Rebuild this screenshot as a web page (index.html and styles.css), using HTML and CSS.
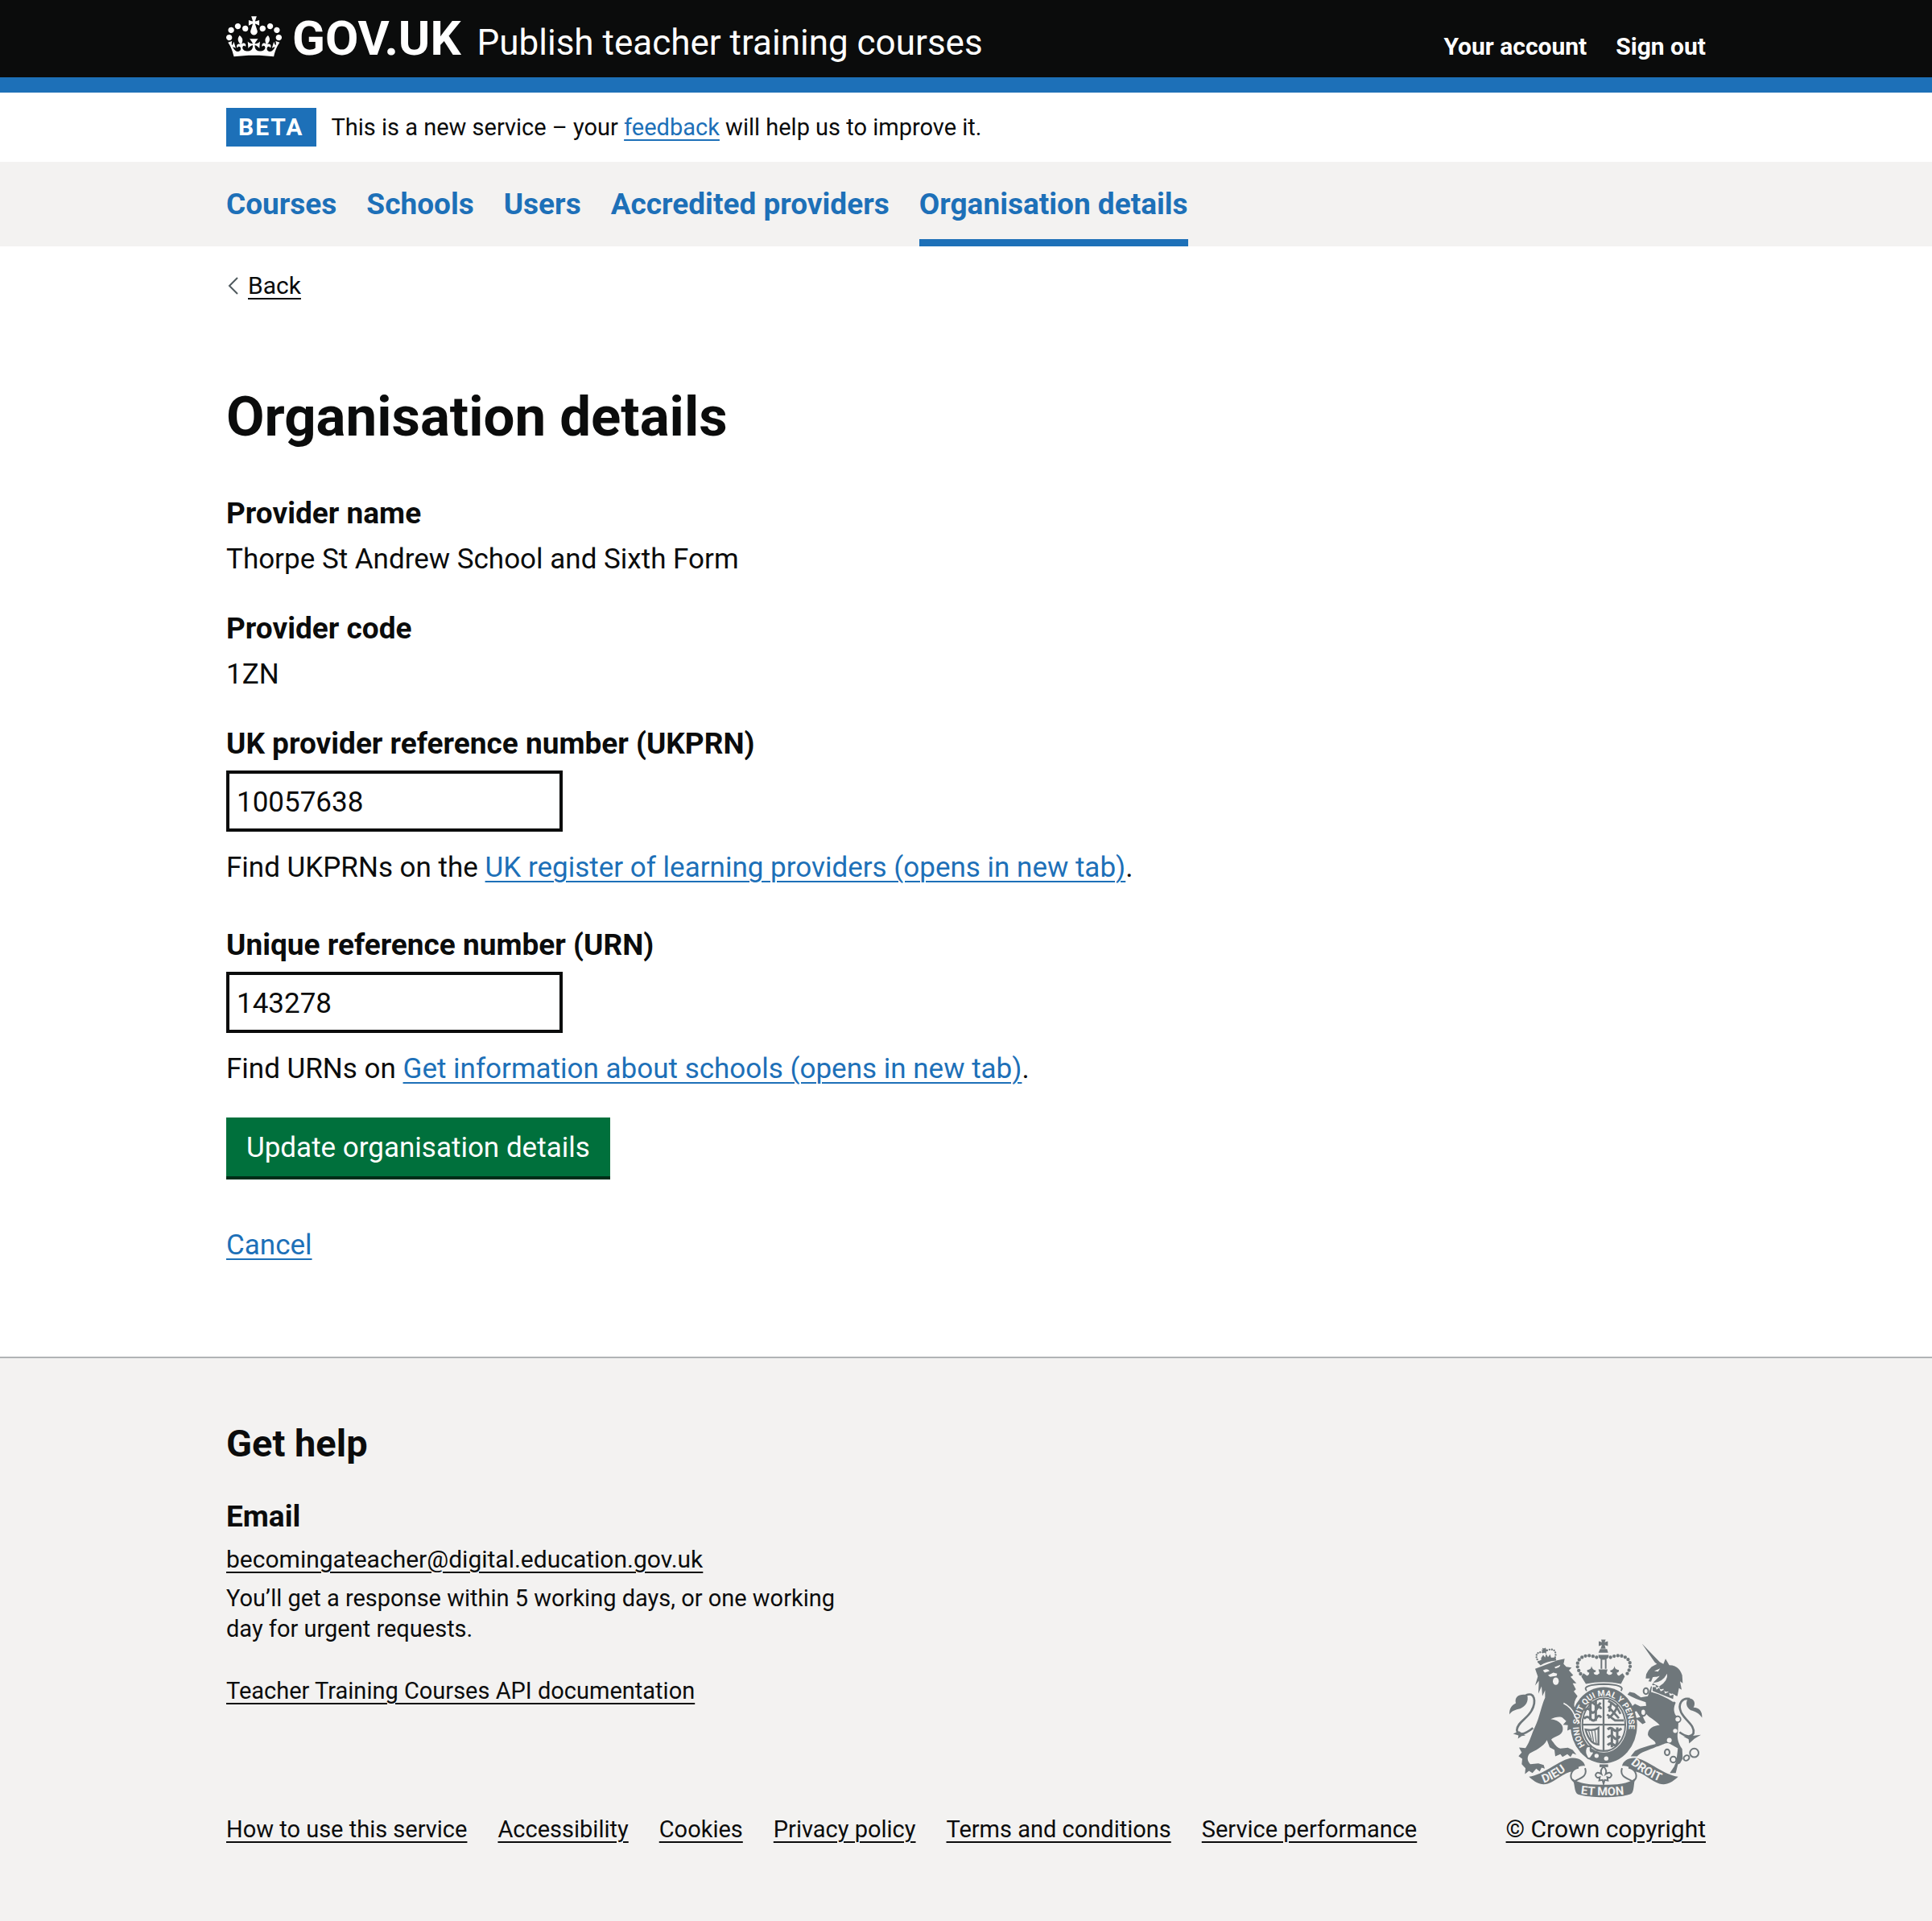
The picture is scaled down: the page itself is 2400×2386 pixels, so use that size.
FILE: index.html
```html
<!DOCTYPE html>
<html lang="en">
<head>
<meta charset="utf-8">
<meta name="viewport" content="width=device-width, initial-scale=1">
<title>Organisation details - Publish teacher training courses</title>
<link rel="stylesheet" href="styles.css">
</head>
<body>
<header class="header">
  <div class="container header-row">
    <div class="brand">
      <a class="logo" href="#">
        <svg class="crown" viewBox="0 0 132 97" aria-hidden="true"><path fill="currentColor" fill-rule="evenodd" d="M25 30.2c3.5 1.5 7.7-.2 9.1-3.7 1.5-3.6-.2-7.8-3.9-9.2-3.6-1.4-7.6.3-9.1 3.9-1.4 3.5.3 7.5 3.9 9zM9 39.5c3.6 1.5 7.8-.2 9.2-3.7 1.5-3.6-.2-7.8-3.9-9.1-3.6-1.5-7.6.2-9.1 3.8-1.4 3.5.3 7.5 3.8 9zM4.4 57.2c3.5 1.5 7.7-.2 9.1-3.8 1.5-3.6-.2-7.7-3.9-9.1-3.5-1.5-7.6.3-9.1 3.8-1.4 3.5.3 7.6 3.9 9.1zm38.3-21.4c3.5 1.5 7.7-.2 9.1-3.8 1.5-3.6-.2-7.7-3.9-9.1-3.6-1.5-7.6.3-9.1 3.8-1.3 3.6.4 7.7 3.9 9.1zm64.4-5.6c-3.6 1.5-7.8-.2-9.1-3.7-1.5-3.6.2-7.8 3.8-9.2 3.6-1.4 7.7.3 9.2 3.9 1.3 3.5-.4 7.5-3.9 9zm15.9 9.3c-3.6 1.5-7.7-.2-9.1-3.7-1.5-3.6.2-7.8 3.7-9.1 3.6-1.5 7.7.2 9.2 3.8 1.5 3.5-.3 7.5-3.8 9zm4.7 17.7c-3.6 1.5-7.8-.2-9.2-3.8-1.5-3.6.2-7.7 3.9-9.1 3.6-1.5 7.7.3 9.2 3.8 1.3 3.5-.4 7.6-3.9 9.1zM89.3 35.8c-3.6 1.5-7.8-.2-9.2-3.8-1.4-3.6.2-7.7 3.9-9.1 3.6-1.5 7.7.3 9.2 3.8 1.4 3.6-.3 7.7-3.9 9.1zM69.7 17.7l8.9 4.7V9.3l-8.9 2.8c-.2-.3-.5-.6-.9-.9L72.4 0H59.6l3.5 11.2c-.3.3-.6.5-.9.9l-8.8-2.8v13.1l8.8-4.7c.3.3.6.7.9.9l-5 15.4v.1c-.2.8-.4 1.6-.4 2.4 0 4.1 3.1 7.5 7 8.1h.2c.3 0 .7.1 1 .1.4 0 .7 0 1-.1h.2c4-.6 7.1-4.1 7.1-8.1 0-.8-.1-1.7-.4-2.4V34l-5.1-15.4c.4-.2.7-.6 1-.9zM66 92.8c16.9 0 32.8 1.1 47.1 3.2 4-16.9 8.9-26.7 14-33.5l-9.6-3.4c1 4.9 1.1 7.2 0 10.2-1.5-1.4-3-4.3-4.2-8.7L108.6 76c2.8-2 5-3.2 7.5-3.3-4.4 9.4-10 11.9-13.6 11.2-4.3-.8-6.3-4.6-5.6-7.9 1-4.7 5.7-5.9 8-.5 4.3-8.7-3-11.4-7.6-8.8 7.1-7.2 7.9-13.5 2.1-21.1-8 6.1-8.1 12.3-4.5 20.8-4.7-5.4-12.1-2.5-9.5 6.2 3.4-5.2 7.9-2 7.2 3.1-.6 4.3-6.4 7.8-13.5 7.2-10.3-.9-10.9-8-11.2-13.8 2.5-.5 7.1 1.8 11 7.3L80.2 60c-4.1 4.4-8 5.3-12.3 5.4 1.4-4.4 8-11.6 8-11.6H55.5s6.4 7.2 7.9 11.6c-4.2-.1-8-1-12.3-5.4l1.4 16.4c3.9-5.5 8.5-7.7 10.9-7.3-.3 5.8-.9 12.8-11.1 13.8-7.2.6-12.9-2.9-13.5-7.2-.7-5 3.8-8.3 7.1-3.1 2.7-8.7-4.6-11.6-9.4-6.2 3.7-8.5 3.6-14.7-4.6-20.8-5.8 7.6-5 13.9 2.2 21.1-4.7-2.6-11.9.1-7.7 8.8 2.3-5.5 7.1-4.2 8.1.5.7 3.3-1.3 7.1-5.7 7.9-3.5.7-9-1.8-13.5-11.2 2.5.1 4.7 1.3 7.5 3.3l-4.7-15.4c-1.2 4.4-2.7 7.2-4.3 8.7-1.1-3-.9-5.3 0-10.2l-9.5 3.4c5 6.9 9.9 16.7 14 33.5 14.8-2.1 30.8-3.2 47.7-3.2z"/></svg>
        <span class="wordmark">GOV.UK</span>
      </a>
      <a class="service-name" href="#">Publish teacher training courses</a>
    </div>
    <nav class="account" aria-label="Account">
      <a href="#">Your account</a>
      <a href="#">Sign out</a>
    </nav>
  </div>
</header>
<div class="container phase">
  <strong class="tag">BETA</strong>
  <span>This is a new service – your <a class="link" href="#">feedback</a> will help us to improve it.</span>
</div>
<nav class="primary" aria-label="Primary">
  <ul class="container primary-list">
    <li><a href="#">Courses</a></li>
    <li><a href="#">Schools</a></li>
    <li><a href="#">Users</a></li>
    <li><a href="#">Accredited providers</a></li>
    <li><a class="current" href="#" aria-current="page">Organisation details</a></li>
  </ul>
</nav>
<main class="container main">
  <a class="back" href="#">
    <svg class="chevron" viewBox="0 0 14 22" aria-hidden="true"><path d="M12 1 2 11l10 10" fill="none" stroke="#505a5f" stroke-width="2"/></svg>
    <span class="back-text">Back</span>
  </a>
  <h1 class="title">Organisation details</h1>
  <form class="form" action="#">
    <dl class="details">
      <div class="detail"><dt>Provider name</dt><dd>Thorpe St Andrew School and Sixth Form</dd></div>
      <div class="detail"><dt>Provider code</dt><dd>1ZN</dd></div>
    </dl>
    <div class="field">
      <label for="ukprn">UK provider reference number (UKPRN)</label>
      <input class="input" id="ukprn" type="text" value="10057638">
      <p class="hint">Find UKPRNs on the <a class="link" href="#">UK register of learning providers (opens in new tab)</a>.</p>
    </div>
    <div class="field">
      <label for="urn">Unique reference number (URN)</label>
      <input class="input" id="urn" type="text" value="143278">
      <p class="hint">Find URNs on <a class="link" href="#">Get information about schools (opens in new tab)</a>.</p>
    </div>
    <button class="button" type="submit">Update organisation details</button>
  </form>
  <a class="link" href="#">Cancel</a>
</main>
<footer class="footer">
  <div class="container footer-row">
    <div class="footer-main">
      <h2 class="help-title">Get help</h2>
      <h3 class="email-title">Email</h3>
      <a class="footer-link email" href="#">becomingateacher@digital.education.gov.uk</a>
      <p class="response">You’ll get a response within 5 working days, or one working day for urgent requests.</p>
      <a class="footer-link" href="#">Teacher Training Courses API documentation</a>
      <ul class="footer-links">
        <li><a class="footer-link" href="#">How to use this service</a></li>
        <li><a class="footer-link" href="#">Accessibility</a></li>
        <li><a class="footer-link" href="#">Cookies</a></li>
        <li><a class="footer-link" href="#">Privacy policy</a></li>
        <li><a class="footer-link" href="#">Terms and conditions</a></li>
        <li><a class="footer-link" href="#">Service performance</a></li>
      </ul>
    </div>
    <a class="copyright footer-link" href="#">
      <svg class="crest" viewBox="72 50 720 590" aria-hidden="true">
        <defs>
          <path id="garter-path" d="M354 445A93 111 0 1 1 494 445"/>
          <path id="dieu-path" d="M200 585Q255 566 314 514"/>
          <path id="droit-path" d="M524 514Q576 560 660 590"/>
          <path id="mon-path" d="M338 626Q422 638 516 626"/>
        </defs>
        <g class="ink">
          <!-- lion -->
          <path d="M168 160L200 148L250 128L278 122L274 142L284 152L304 155L294 166L310 184L300 190L322 214L308 214L320 236L312 244L326 262C316 275 312 290 314 300L332 335L338 372L330 394L318 382L310 398L300 385L288 390L290 370L272 368L284 355L270 342C262 335 240 340 226 347C262 352 276 372 270 392C262 412 235 412 228 424C240 440 250 455 262 457L290 454L308 462L322 480L308 475L300 488L288 478L270 488L262 478L243 486L240 462L222 452L212 425C200 450 165 465 148 475C135 490 140 505 150 515L180 512L200 518L204 532L192 528L185 542L172 532L158 548L145 540L130 552L132 530L118 515L120 495L106 485L118 472L108 453L132 455C150 430 155 400 168 375C185 340 190 300 205 268L205 240L195 262L192 225L180 252L182 205L168 222L178 188Z"/>
          <path d="M138 257C110 252 90 262 96 288C82 295 72 305 72 330C80 316 95 312 112 308C132 300 146 280 138 257Z"/>
          <path class="line" stroke-width="8" d="M134 258C165 244 174 280 155 315C140 345 100 360 100 388C102 408 125 408 160 380"/>
          <path d="M86 402L108 392L132 408L118 410L104 420L106 408Z"/>
          <path d="M176 134Q205 116 244 118L247 129Q210 132 188 147Z"/>
          <path d="M190 120l8-12 7 10 4-14 7 12 8-10 4 14-36 12Z"/>
          <path class="line" stroke-width="7" stroke-linecap="round" stroke-dasharray="0 9" d="M181 133C165 112 172 94 200 98C218 84 240 84 243 98Q246 108 242 118"/>
          <path d="M194 82l7 2 6-3 2 7 6 4-6 4v8l-6-4-8 2 1-8-5-5 6-1Z"/>
          <!-- imperial crown -->
          <path d="M414 51h17l-4 10 12-4v18l-12-4 4 14h-19l5-14-12 4V57l12 4ZM410 86h26l4 14h-36ZM404 108h38c2 10-6 18-19 18s-21-8-19-18Z"/>
          <path class="line" stroke-width="6" d="M415 124v36M431 124v36"/>
          <path class="line" stroke-width="13" stroke-linecap="round" stroke-dasharray="0 14" d="M397 117C350 98 316 125 328 160Q335 178 344 186M449 117C496 98 532 125 520 160Q513 178 504 186"/>
          <path d="M340 188l8-12 14 10q8-4 8-12-10-2-8-10 14 0 16-14 4 14 16 16 2 6-8 8 2 10 14 8l8-6-4-14h34l-4 14 8 6q12 2 14-8-10-2-8-8 12-2 16-16 2 14 16 14 2 8-8 10 0 8 8 12l14-10 8 12-14 28Q424 202 357 216Z"/>
          <path class="line" stroke-width="6" d="M360 242C344 226 374 218 424 217C474 218 502 226 488 242"/>
          <!-- garter -->
          <ellipse cx="424" cy="370" rx="124" ry="142"/>
        </g>
        <g class="paper">
          <path d="M197 166Q212 156 222 168L204 174ZM240 154L262 145Q260 156 244 158ZM216 184L236 174L250 178L248 186L224 190Z"/>
          <ellipse cx="245" cy="206" rx="11" ry="14"/>
          <ellipse cx="424" cy="368" rx="86" ry="104"/>
          <path class="gap" stroke-width="5" d="M274 288Q302 302 314 330T334 362"/>
          <circle cx="397" cy="484" r="8"/><circle cx="433" cy="494" r="8"/>
        </g>
        <g class="ink">
          <ellipse class="line" stroke-width="6" cx="424" cy="368" rx="80" ry="98"/>
          <path class="line" stroke-width="7" d="M423 268v200M342 368h164"/>
          <path class="line" stroke-width="9" d="M352 316q12-16 22 0t22-4 18-2M366 292q14-12 24 0t22-6M350 346q12-14 24 0t22-2 18-2M374 280v72M394 276v78M438 386q12-12 22 0t30-4M438 416q14-14 24 0t22-6M438 444q12-12 22-2t14-8M454 378v74M474 378v60"/>
          <path class="line" stroke-width="8" d="M440 280q30 12 46 48M440 344q26-16 36-50M440 300l40 44M436 330l30 22h32M452 286l-8 34"/>
          <path class="line" stroke-width="7" d="M356 386q32 6 48-6v62q-34-2-48-56Z"/>
          <path class="line" stroke-width="4" d="M366 386l12 38M378 386l8 46M390 384l6 54"/>
          <path d="M380 456Q424 478 468 456L440 468H400Z"/>
          <!-- garter buckle -->
          <path class="outlined" stroke-width="6" d="M358 452q10-8 18 0-4 10 0 16 12-2 10 8l-10 14q-8 8-14 0-12-18-4-38Z"/>
          <!-- unicorn -->
          <path d="M566 66L632 134L646 142L654 122L668 146C700 146 712 170 716 184L718 214L708 206L714 238L704 232L698 262C670 252 640 240 604 220C608 206 622 200 632 186C620 192 610 188 606 192L600 208L590 206L596 196L580 196L582 180L590 166L602 152L622 142L614 136Z"/>
          <path d="M600 224C630 246 660 264 692 286C686 300 682 312 690 330C708 350 700 372 700 396C694 420 706 446 716 458L718 494L708 512L700 516L692 548L670 548L686 524L694 505L700 456L672 440C655 430 644 446 620 450C590 464 560 470 548 486L524 486L540 466C560 454 590 446 616 440C622 428 590 420 588 404C590 380 610 372 632 370C616 350 596 344 580 326L570 340L580 360L568 366L552 352L540 344L560 340L546 318L526 322L524 304L540 290L560 300L582 298L580 284L550 274L528 264L512 256L520 246L538 250L562 266L588 262Z"/>
          <path d="M738 270C760 268 768 288 758 304C780 304 792 320 790 342C778 324 764 318 748 314C730 304 728 284 738 270Z"/>
          <path class="line" stroke-width="8" d="M744 272C716 266 698 290 712 322C730 356 764 370 758 400Q746 424 706 396"/>
          <path d="M720 412L748 410L786 406L762 420L742 438L740 422Z"/>
          <g class="line" stroke-width="6">
            <ellipse cx="581" cy="243" rx="9" ry="11"/><ellipse cx="571" cy="322" rx="10" ry="13"/>
            <circle cx="761" cy="473" r="16"/><ellipse cx="732" cy="492" rx="11" ry="9" transform="rotate(-35 732 492)"/>
            <circle cx="683" cy="498" r="11"/><ellipse cx="660" cy="471" rx="9" ry="11"/><circle cx="699" cy="348" r="11"/>
          </g>
        </g>
        <g class="paper">
          <path d="M612 168L634 158L626 170ZM604 212Q640 214 660 178Q664 206 630 226ZM604 222l12-2 4 12 10-8 4 14 12-4 4 14 14-4 2 12 14-4 10 6-6 26Q640 256 600 246Z"/>
          <circle cx="690" cy="391" r="8"/><circle cx="668" cy="426" r="9"/><circle cx="699" cy="348" r="8"/>
          <ellipse cx="571" cy="322" rx="7" ry="10"/>
        </g>
        <g class="ink">
          <path d="M606 228l12 0 2 10 10-8 6 14 12-6 4 14 14-6 4 14 14-4-2 16Q640 256 606 242Z"/>
          <!-- motto ribbon -->
          <path d="M145 562C200 555 250 505 298 493C325 488 350 500 354 522C340 518 318 528 308 542C275 545 250 575 215 588C190 594 170 586 145 562Z"/>
          <path d="M701 562C646 555 596 505 548 493C521 488 496 500 492 522C506 518 528 528 538 542C571 545 596 575 631 588C656 594 676 586 701 562Z"/>
          <path class="line" stroke-width="6" d="M330 528C300 534 292 566 314 580C330 568 366 564 354 530M516 528C546 534 554 566 532 580C516 568 480 564 492 530"/>
          <path d="M306 568C330 590 380 592 424 592C470 592 515 590 540 568C534 600 537 625 520 628C480 642 370 642 328 628C312 620 318 590 306 568Z"/>
          <!-- fleur-de-lis -->
          <path d="M408 516h32v10h-32Z"/>
          <path class="outlined" stroke-width="6" d="M423 524q-14 14-8 28-18-12-22 4 4 14 16 8l-2 12 12-2 4 14 4-14 12 2-2-12q12 6 16-8-4-16-22-4 6-14-8-28Z"/>
        </g>
        <g class="motto">
          <text font-size="31"><textPath href="#garter-path">HONI SOIT QUI MAL Y PENSE</textPath></text>
          <text font-size="44"><textPath href="#dieu-path">DIEU</textPath></text>
          <text font-size="44"><textPath href="#droit-path">DROIT</textPath></text>
          <text font-size="44"><textPath href="#mon-path">ET MON</textPath></text>
        </g>
      </svg>
      <span>© Crown copyright</span>
    </a>
  </div>
</footer>
</body>
</html>
```
FILE: styles.css
```css
* { box-sizing: border-box; }
body {
  margin: 0;
  background: #fff;
  color: #0b0c0c;
  font-family: Roboto, "Liberation Sans", sans-serif;
  font-size: 35px;
  line-height: 48px;
}
h1, h2, h3, p, ul, dl, dd { margin: 0; padding: 0; }
ul { list-style: none; }
a { color: inherit; }

.container { width: 100%; max-width: 1838px; margin: 0 auto; }
.link {
  color: #1d70b8;
  text-decoration-thickness: 2px;
  text-underline-offset: 5px;
}

.header {
  background: #0b0c0c;
  color: #fff;
  border-bottom: 19px solid #1d70b8;
}
.header a { text-decoration: none; }
.header-row {
  display: flex;
  justify-content: space-between;
  align-items: baseline;
  padding: 9px 0 10px;
}
.brand { display: flex; align-items: baseline; gap: 20px; }
.logo { display: flex; align-items: baseline; gap: 13px; }
.crown { align-self: center; width: 69px; height: 51px; margin-bottom: 4px; }
.wordmark { font-size: 60px; line-height: 77px; font-weight: 700; }
.service-name { font-size: 44px; line-height: 57px; }
.account {
  display: flex;
  gap: 36px;
  font-size: 30px;
  line-height: 38px;
  font-weight: 700;
}

.phase {
  display: flex;
  align-items: center;
  gap: 19px;
  padding: 19px 0;
  font-size: 29px;
}
.tag {
  padding: 0 15px;
  background: #1d70b8;
  color: #fff;
  font-size: 30px;
  letter-spacing: 2px;
}

.primary { background: #f3f2f1; }
.primary-list { display: flex; gap: 37px; }
.primary-list a {
  display: block;
  padding: 29px 0 19px;
  border-bottom: 9px solid transparent;
  color: #1d70b8;
  font-size: 37px;
  font-weight: 700;
  text-decoration: none;
}
.primary-list .current { border-bottom-color: #1d70b8; }

.main { padding: 30px 0 114px; }
.back {
  display: flex;
  align-items: center;
  width: fit-content;
  gap: 11px;
  padding-left: 2px;
  font-size: 30px;
  line-height: 38px;
  text-decoration: none;
}
.chevron { width: 14px; height: 22px; }
.back-text {
  text-decoration: underline;
  text-decoration-thickness: 2px;
  text-underline-offset: 5px;
}
.title { margin: 105px 0 58px; font-size: 69px; line-height: 77px; }
.form {
  display: flex;
  flex-direction: column;
  align-items: flex-start;
  margin-bottom: 58px;
}
.detail { margin-bottom: 38px; }
.detail dt, .field label { font-size: 37px; font-weight: 700; }
.detail dd { margin-top: 9px; }
.field { display: flex; flex-direction: column; align-items: flex-start; }
.field + .field { margin-top: 48px; }
.input {
  width: 418px;
  height: 76px;
  margin: 9px 0 21px;
  padding: 2px 9px 0;
  border: 4px solid #0b0c0c;
  border-radius: 0;
  background: #fff;
  color: inherit;
  font: inherit;
}
.button {
  margin-top: 36px;
  padding: 14px 25px 11px;
  border: 0;
  border-bottom: 4px solid #002d18;
  background: #00703c;
  color: #fff;
  font: inherit;
}

.footer { background: #f3f2f1; border-top: 2px solid #b1b4b6; }
.footer-row {
  display: flex;
  justify-content: space-between;
  align-items: flex-end;
  padding: 77px 0 95px;
  font-size: 29px;
  line-height: 38px;
}
.help-title { margin-bottom: 39px; font-size: 47px; line-height: 57px; }
.email-title { margin-bottom: 10px; font-size: 37px; line-height: 48px; }
.footer-link { text-decoration-thickness: 2px; text-underline-offset: 5px; }
.email { font-size: 30px; }
.response { max-width: 780px; margin: 10px 0 39px; }
.footer-links { display: flex; flex-wrap: wrap; gap: 0 38px; margin-top: 134px; }
.copyright {
  display: flex;
  flex-direction: column;
  align-items: center;
  gap: 20px;
  font-size: 30px;
}
.crest { width: 240px; height: 197px; }
.ink { fill: #6f777b; stroke: none; }
.line { fill: none; stroke: #6f777b; }
.outlined { fill: #f3f2f1; stroke: #6f777b; }
.paper { fill: #f3f2f1; }
.gap { fill: none; stroke: #f3f2f1; }
.motto { fill: #f3f2f1; font-weight: 700; }
```
